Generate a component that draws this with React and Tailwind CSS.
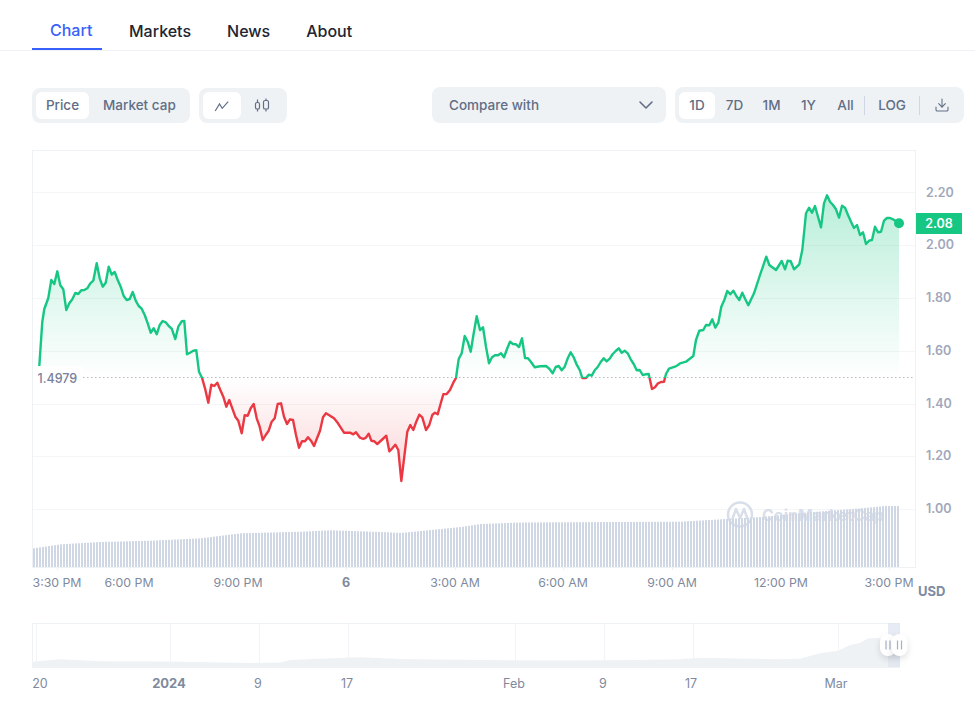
import { ChevronDown, Download } from "lucide-react";

const points = [
  [39.3,366],[42.3,321.7],[44.3,309],[48.3,298],[51.3,280],[54.3,284],[57.3,271.3],[60.3,285.3],[63.3,289.3],[66.3,310],
  [69.3,303.3],[72.3,299.3],[75.3,293],[78.3,294],[81.3,290.3],[84.3,290],[87.3,288.3],[90.3,283.3],[93.3,280.7],[96.7,263.3],
  [99.7,278.3],[102.7,286.7],[105.7,282.7],[108.7,266.7],[111.7,274.7],[114.7,272],[117.7,280],[120.7,286.7],[123.7,296],[126.7,300],
  [129.7,299],[132.7,292],[135.7,300.7],[138.7,306],[141.7,308.7],[144.7,315],[147.7,323.3],[150.7,332.7],[153.7,328.3],[156.7,334.3],
  [159.7,325],[162.7,321],[165.7,322.3],[168.7,326],[171.7,328.7],[175.3,339],[178.3,326.7],[181.7,321.3],[184.3,321],[187,354.3],
  [190,352.7],[193.3,350.7],[196.3,350.3],[199,371.7],[202,377.7],[205,388.3],[208.3,402.7],[211.3,384.7],[214.3,386],[217.3,382.7],
  [220.3,390],[223.3,396.7],[226.3,406.7],[229.3,400],[232.3,408.3],[235.3,416.7],[238.3,420.7],[241.7,433.3],[244.7,415.3],[247.7,415.7],
  [250.7,408.3],[253.7,404],[256.7,418.3],[259.7,426.7],[262.7,440],[265.7,435],[268.7,430.7],[271.7,421.7],[274.7,418.3],[277.7,404],
  [281,403.3],[284,416.7],[287,424],[290,419.3],[293,420],[296,435],[299,447.7],[302,441.3],[305,441.3],[308,437.3],
  [311,440.7],[314,446],[317,438.3],[320,430.7],[323,417.3],[326,413.3],[330,415.7],[334,418.3],[338,423.3],[344,432.7],
  [350,432.7],[353.3,434.3],[356,432.3],[360,437.7],[363.3,439],[366,437.7],[368.7,433.7],[371.3,440.7],[374.3,441.3],[377.3,444],
  [381.7,440],[386.3,435.7],[389.3,451.3],[392.3,448.3],[395.3,444.7],[398.3,450],[401.3,481],[404.3,456.7],[407.3,431.7],[410.3,425],
  [413.3,430],[416.3,421.7],[419.3,414.7],[422.3,417.3],[426,430],[429.3,425],[432.3,415],[435,412.7],[437.7,414.3],[443.3,394.3],
  [446.7,394],[450,390],[453.3,382.7],[456,378],[458.7,359],[461.7,353.3],[464.7,336],[467.7,341.7],[470.7,351.7],[473.7,333.3],
  [476.7,316.3],[480,330],[483,327.3],[486,346.7],[489,363.3],[492,357.3],[495,355.3],[498,355.3],[501,353.3],[504,357.3],
  [507,349],[510,341.7],[513,344],[516,344.3],[519,347],[522,338.3],[525,358],[528,358.3],[531,362],[534.7,367.3],
  [540,366.3],[546,366],[549.3,368.7],[552.7,373.3],[555.7,367],[558.7,366],[561.7,370.3],[564.7,366.7],[567.7,358.3],[570.7,352.3],
  [573.7,357.3],[576.7,364.7],[579.7,370],[582.3,378],[586,378],[588.7,374.7],[591.7,375.7],[594.7,370.3],[597.7,367],[600.7,362],
  [603.7,358.3],[606.7,361.3],[609.7,358.7],[612.7,354],[615.7,351],[618.7,348.3],[621.7,352.7],[624.7,350.7],[627.7,353.3],[630.7,359.3],
  [633.7,364],[636.7,370.3],[639.7,370],[642.7,375],[645.7,374.3],[648.7,374],[652,389],[655,387.3],[658,383.3],[661,382],
  [664,381.7],[666,374],[669,368.7],[672,367.7],[675,366.7],[678,365],[680,363.3],[686,361.7],[693.3,356],[696,340],
  [699.3,330.7],[703.3,330],[706,325],[709.3,325.3],[712.3,319.3],[715.3,327.7],[718.3,322.7],[721.3,306.7],[724.3,300],[727.3,291],
  [730.3,294.3],[733.3,290.7],[736.3,296],[739.3,300],[742.3,292.7],[745.3,299.3],[748.3,305.3],[754,293.3],[760,275],[766.3,256.7],
  [769.3,265],[776,270],[781.7,261],[785,269.3],[787.7,260.7],[790.7,261.3],[794,269.3],[799.3,264.3],[802.3,250],[806,213.3],
  [809,207.7],[812,212.7],[815,206],[818,216.7],[821,227.3],[824,203.3],[827,195.3],[830,201.7],[833,205],[836,209.3],
  [839,217.7],[842,205.7],[845,207.7],[848,215],[851,221.7],[854,228],[857,225],[860,235],[863,232.3],[866,244],
  [869,240.7],[872,240],[875,226.7],[878,232.3],[881,231.7],[884,220.7],[887,218],[890,218],[893,219.3],[899,223.3],
];

const volumeKeys = [
  [33,548.3],[60,544.3],[100,542],[150,540.7],[200,538.3],[240,533.3],[300,531.7],[330,530.3],[380,532],[400,533],
  [460,527],[480,524],[520,522.5],[680,521.7],[720,519.3],[760,517],[800,513],[860,508.3],[885,506],[901,506],
];

const navKeys = [
  [32,661.7],[60,659.3],[100,661.3],[170,661.5],[250,663],[280,662.5],[290,660],[320,658.7],[360,657.3],[400,659],
  [480,660],[560,660.5],[640,660],[680,659.3],[700,657.7],[780,659.3],[800,658.7],[820,653.3],[838,650.7],[850,645],
  [860,643],[868,638.3],[880,638],[888,640],[900,642],
];

function lerp(keys, x) {
  for (let i = 1; i < keys.length; i++) {
    if (x <= keys[i][0]) {
      const [x0, y0] = keys[i - 1];
      const [x1, y1] = keys[i];
      return y0 + ((y1 - y0) * (x - x0)) / (x1 - x0);
    }
  }
  return keys[keys.length - 1][1];
}

const bars = [];
for (let x = 33; x <= 899; x += 3) bars.push(x);

const linePath = points.map((p) => p.join(",")).join(" ");
const areaPath = `39.3,378 ${linePath} 899,378`;
const navPath = `32,667 ${navKeys.map((p) => p.join(",")).join(" ")} 900,667`;

const gridY = [192.5, 245.5, 298.5, 351.5, 404.5, 456.5, 509.5];
const priceLabels = [
  ["2.20", 196.5],
  ["2.00", 249.2],
  ["1.80", 301.5],
  ["1.60", 354.5],
  ["1.40", 407.5],
  ["1.20", 459.5],
  ["1.00", 512.5],
];
const timeLabels = [
  ["3:30 PM", 57],
  ["6:00 PM", 129],
  ["9:00 PM", 238],
  ["6", 346, true],
  ["3:00 AM", 455],
  ["6:00 AM", 563],
  ["9:00 AM", 672],
  ["12:00 PM", 781],
  ["3:00 PM", 889],
];
const navLabels = [
  ["20", 40],
  ["2024", 169, true],
  ["9", 258],
  ["17", 347],
  ["Feb", 514],
  ["9", 603],
  ["17", 691],
  ["Mar", 836],
];
const navTicks = [36, 170, 259, 348, 515, 604, 693, 838];

function MainChart() {
  return (
    <svg width="975" height="450" viewBox="0 150 975 450" className="block">
      <defs>
        <linearGradient id="greenFill" gradientUnits="userSpaceOnUse" x1="0" y1="195" x2="0" y2="378">
          <stop offset="0" stopColor="#16c784" stopOpacity="0.3" />
          <stop offset="1" stopColor="#16c784" stopOpacity="0" />
        </linearGradient>
        <linearGradient id="redFill" gradientUnits="userSpaceOnUse" x1="0" y1="378" x2="0" y2="481">
          <stop offset="0" stopColor="#ea3943" stopOpacity="0" />
          <stop offset="1" stopColor="#ea3943" stopOpacity="0.22" />
        </linearGradient>
        <clipPath id="aboveBase">
          <rect x="0" y="150" width="975" height="228" />
        </clipPath>
        <clipPath id="belowBase">
          <rect x="0" y="378" width="975" height="200" />
        </clipPath>
      </defs>

      {gridY.map((y) => (
        <line key={y} x1="32" x2="915" y1={y} y2={y} stroke="#f5f6f8" />
      ))}
      <rect x="32.5" y="150.5" width="883" height="417" fill="none" stroke="#eff2f5" />

      <polygon points={areaPath} fill="url(#greenFill)" clipPath="url(#aboveBase)" />
      <polygon points={areaPath} fill="url(#redFill)" clipPath="url(#belowBase)" />

      {/* watermark */}
      <g fill="none" stroke="#d9dfea">
        <circle cx="740" cy="514.5" r="12" strokeWidth="2.5" />
        <path d="M732 520 L736 509 L740 518 L744 509 L748 520" strokeWidth="2.5" strokeLinejoin="round" />
      </g>
      <text x="762" y="521" className="fill-[#d9dfea] text-[16px] font-bold">
        CoinMarketCap
      </text>

      {bars.map((x) => {
        const top = lerp(volumeKeys, x);
        return <rect key={x} x={x} y={top} width="2" height={567 - top} fill="#cfd6e4" />;
      })}

      <line x1="83" x2="915" y1="377.5" y2="377.5" stroke="#b4b9c4" strokeDasharray="1.5 2.5" />
      <polyline points={linePath} fill="none" stroke="#16c784" strokeWidth="2.4" strokeLinejoin="round" clipPath="url(#aboveBase)" />
      <polyline points={linePath} fill="none" stroke="#ea3943" strokeWidth="2.4" strokeLinejoin="round" clipPath="url(#belowBase)" />
      <circle cx="899" cy="223.3" r="5" fill="#16c784" />

      <rect x="33" y="366" width="50" height="24" rx="4" fill="#fff" />
      <text x="37.5" y="382.5" className="fill-[#7a819b] text-[12.5px] font-medium">
        1.4979
      </text>

      {priceLabels.map(([label, y]) => (
        <text key={label} x="926" y={y} className="fill-[#a1a7bb] text-[12.5px] font-semibold">
          {label}
        </text>
      ))}
      <rect x="916" y="213" width="46" height="21" fill="#16c784" />
      <text x="939" y="228" textAnchor="middle" className="fill-white text-[12.5px] font-semibold">
        2.08
      </text>

      {timeLabels.map(([label, x, bold]) => (
        <g key={label + x}>
          <line x1={x + 0.5} x2={x + 0.5} y1="567" y2="570" stroke="#eff2f5" />
          <text
            x={x}
            y="587"
            textAnchor="middle"
            className={bold ? "fill-[#808a9d] text-[12.5px] font-bold" : "fill-[#808a9d] text-[12.3px]"}
          >
            {label}
          </text>
        </g>
      ))}
      <text x="918" y="596" className="fill-[#7f8aa3] text-[13px] font-bold">
        USD
      </text>
    </svg>
  );
}

function NavChart() {
  return (
    <svg width="975" height="78" viewBox="0 623 975 78" className="block mt-[23px]">
      <rect x="32.5" y="623.5" width="867" height="44" fill="none" stroke="#eff2f5" />
      {navTicks.map((x) => (
        <line key={x} x1={x + 0.5} x2={x + 0.5} y1="623" y2="667" stroke="#f3f4f7" />
      ))}
      <polygon points={navPath} fill="#eff2f5" />
      <rect x="888" y="623" width="12" height="44" fill="#dfe4ef" fillOpacity="0.75" />

      {[888, 899.5].map((x) => (
        <g key={x}>
          <rect x={x - 8} y="634" width="16" height="22" rx="8" fill="#fff" className="drop-shadow-md" />
          <line x1={x - 2} x2={x - 2} y1="640.5" y2="649.5" stroke="#a6b0c3" strokeWidth="1.2" />
          <line x1={x + 2} x2={x + 2} y1="640.5" y2="649.5" stroke="#a6b0c3" strokeWidth="1.2" />
        </g>
      ))}

      {navLabels.map(([label, x, bold]) => (
        <text
          key={label + x}
          x={x}
          y="688"
          textAnchor="middle"
          className={bold ? "fill-[#808a9d] text-[13px] font-bold" : "fill-[#808a9d] text-[12.5px]"}
        >
          {label}
        </text>
      ))}
    </svg>
  );
}

export default function App() {
  return (
    <div className="w-[975px] h-[701px] overflow-hidden bg-white font-[Inter,sans-serif]">
      <div className="flex h-[51px] border-b border-[#eff2f5] pl-8 text-base font-medium text-[#222531]">
        <div className="flex items-center w-[70px] h-[50px] pt-[12px] pl-[18px] text-[#3861fb] border-b-2 border-[#3861fb]">Chart</div>
        <div className="flex items-center h-[50px] pt-[14px] pb-[2px] pl-[27px] pr-[18px]">Markets</div>
        <div className="flex items-center h-[50px] pt-[14px] pb-[2px] px-[18px]">News</div>
        <div className="flex items-center h-[50px] pt-[14px] pb-[2px] px-[18px]">About</div>
      </div>

      <div className="flex items-center mt-9 h-9 pl-8 pr-[11px] text-[13.5px] font-medium text-[#616e85]">
        <div className="flex items-center w-[158px] h-[35px] rounded-lg bg-[#eff2f5] pl-1">
          <div className="flex items-center justify-center h-[27px] w-[53px] rounded-md bg-white">Price</div>
          <div className="flex items-center h-[27px] pl-[14px]">Market cap</div>
        </div>
        <div className="flex items-center h-[35px] ml-[9px] rounded-lg bg-[#eff2f5] p-1">
          <div className="flex items-center justify-center w-[38px] h-[27px] rounded-md bg-white">
            <svg width="16" height="16" viewBox="0 0 16 16" fill="none" stroke="#616e85" strokeWidth="1.2">
              <path d="M1.2 14 L5.5 7 L8.2 11.3 L14.2 4.7" />
            </svg>
          </div>
          <div className="flex items-center justify-center w-[42px] h-[27px]">
            <svg width="16" height="16" viewBox="0 0 16 16" fill="none" stroke="#616e85" strokeWidth="1.2">
              <rect x="1.5" y="5.5" width="4" height="6.5" rx="1.6" />
              <path d="M3.5 2.5 V5.5 M3.5 12 V14.5" />
              <rect x="9.5" y="3.5" width="5" height="8.5" rx="1.6" />
              <path d="M12 1.5 V3.5 M12 12 V14.5" />
            </svg>
          </div>
        </div>

        <div className="flex items-center justify-between ml-auto w-[234px] h-9 rounded-lg bg-[#eff2f5] pl-[17px] pr-2">
          <span>Compare with</span>
          <ChevronDown size={24} strokeWidth={1.6} />
        </div>

        <div className="flex items-center h-9 ml-[9px] w-[289px] rounded-lg bg-[#eff2f5] pl-1">
          <div className="flex items-center justify-center w-9 mr-px h-[27px] rounded-md bg-white">1D</div>
          <div className="flex items-center justify-center w-[37px] h-[27px]">7D</div>
          <div className="flex items-center justify-center w-[37px] h-[27px]">1M</div>
          <div className="flex items-center justify-center w-[37px] h-[27px]">1Y</div>
          <div className="flex items-center justify-center w-[37px] h-[27px]">All</div>
          <div className="w-px h-[19px] bg-[#cfd6e4]" />
          <div className="flex items-center justify-center w-[54px] h-[27px]">LOG</div>
          <div className="w-px h-[19px] bg-[#cfd6e4]" />
          <div className="flex items-center justify-center w-11 h-[27px]">
            <Download size={16} strokeWidth={1.6} />
          </div>
        </div>
      </div>

      <div className="mt-[27px]">
        <MainChart />
        <NavChart />
      </div>
    </div>
  );
}
